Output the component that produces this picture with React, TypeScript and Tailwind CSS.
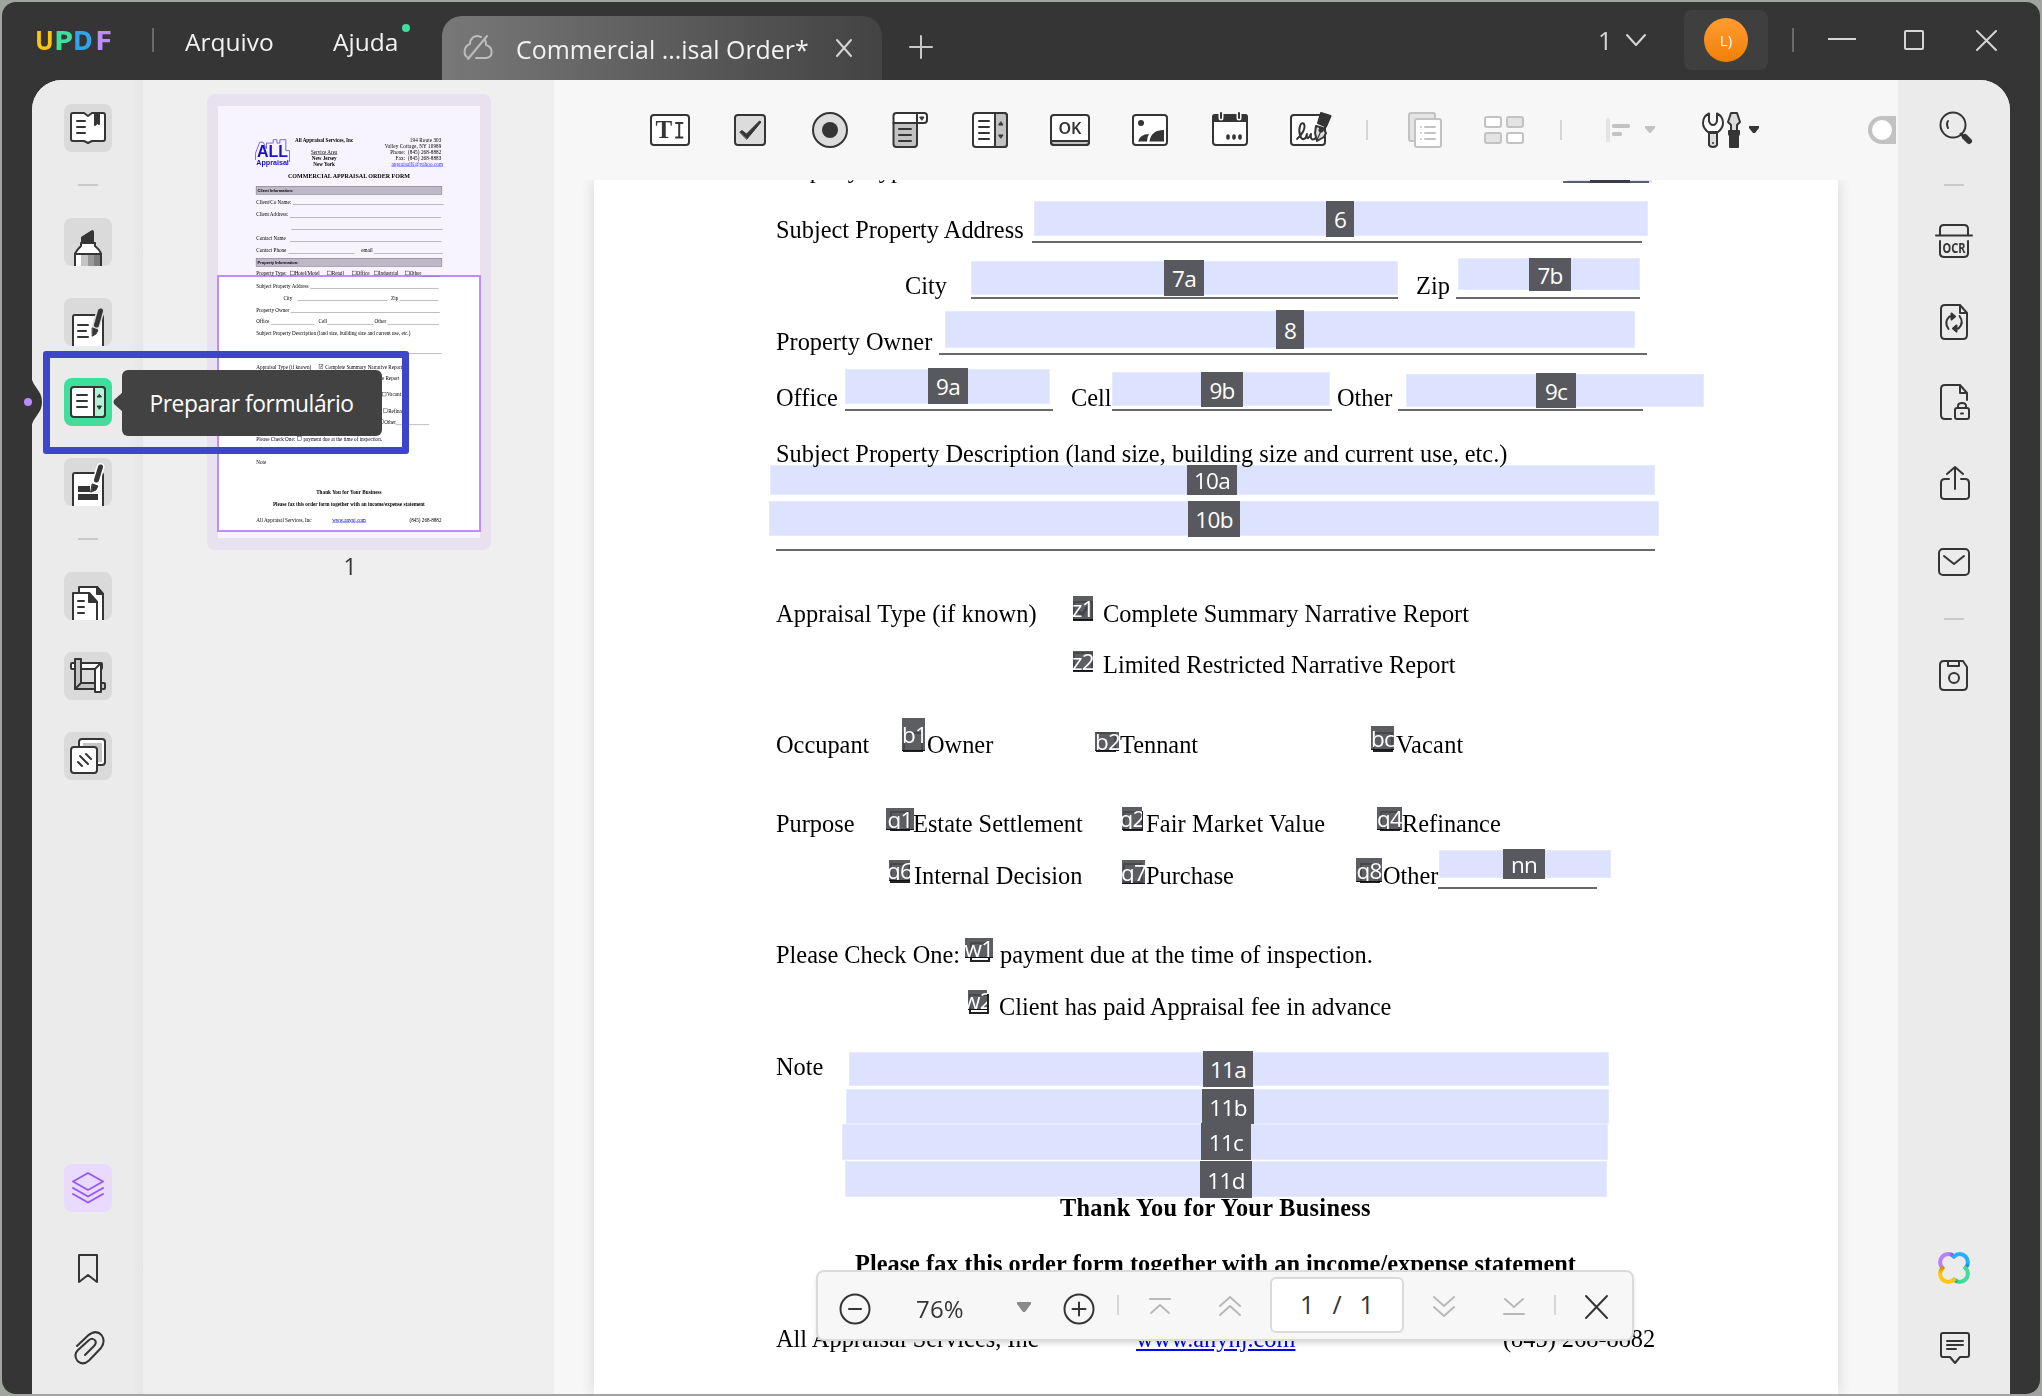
import React from 'react';

const DARK = '#353535';
const MUTED = '#c2c2c2';

interface BoxProps {
  className?: string;
  children?: React.ReactNode;
}

/* --- ICON HELPERS --- */

const Icon: React.FC<{ size?: number; children: React.ReactNode; color?: string; className?: string }> = ({
  size = 44,
  children,
  color = DARK,
  className = '',
}) => (
  <svg
    width={size}
    height={size}
    viewBox={`0 0 ${size} ${size}`}
    fill="none"
    stroke={color}
    strokeWidth={2}
    strokeLinecap="round"
    strokeLinejoin="round"
    className={`shrink-0 ${className}`}
  >
    {children}
  </svg>
);

/* --- TITLE BAR --- */

const TitleBar = () => (
  <header className="flex h-[78px] shrink-0 text-[#f2f2f2]">
    <div className="ml-[33px] flex h-[76px] w-[81px] items-center text-[27px] font-bold font-['Noto_Sans'] [&>span]:origin-left">
      <span className="w-[19px] scale-x-[0.92] text-[#ffc60a]">U</span>
      <span className="w-[19px] scale-x-[1.15] text-[#3fdf9b]">P</span>
      <span className="w-[22px] text-[#30a4ea]">D</span>
      <span className="w-[18px] scale-x-[1.15] text-[#bd8cff]">F</span>
    </div>
    <div className="mt-[26px] ml-[36px] h-[24px] w-[2px] bg-[#6a6a6a]" />
    <div className="ml-[31px] w-[148px] pt-[22px] text-[24.500px] leading-[36px]">Arquivo</div>
    <div className="relative w-[109px] pt-[22px] text-[24.500px] leading-[36px]">
      Ajuda
      <span className="absolute top-[22px] left-[69px] size-[8px] rounded-full bg-[#3fdf9b]" />
    </div>
    <div className="mt-[14px] flex h-[64px] w-[440px] items-start rounded-t-[20px] bg-linear-to-r from-[#787878] to-[#434343] pl-[20px]">
      <Icon size={32} color="#bdbdbd" className="mt-[16px]">
        <path d="M19 5 C12 2 8 7 8 12 C2 14 1 22 5 25 M23 8 C24 10 24 12 24 13 C31 15 32 25 24 26 L14 26" />
        <path d="M25 4 L6 27" />
      </Icon>
      <span className="ml-[22px] w-[316px] pt-[15px] text-[24.900px] leading-[36px] whitespace-nowrap">
        Commercial ...isal Order*
      </span>
      <Icon size={24} color="#d6d6d6" className="mt-[20px]">
        <path d="M5 4 L19 20 M19 4 L5 20" />
      </Icon>
    </div>
    <Icon size={28} color="#c9c9c9" className="mt-[31px] ml-[25px]">
      <path d="M14 3 V25 M3 14 H25" />
    </Icon>
    <div className="grow" />
    <span className="w-[26px] pt-[20px] text-[25px] leading-[36px] text-[#d6d6d6]">1</span>
    <Icon size={24} color="#d6d6d6" className="mt-[26px]">
      <path d="M3 7 L12 17 L21 7" />
    </Icon>
    <div className="mt-[8px] ml-[36px] flex h-[60px] w-[84px] items-center justify-center rounded-[8px] bg-[#3f3f3f]">
      <div className="flex size-[44px] items-center justify-center rounded-full bg-linear-to-b from-[#ff9d2e] to-[#f07f00] text-[15px] text-white">
        L)
      </div>
    </div>
    <div className="mt-[26px] ml-[24px] h-[24px] w-[2px] bg-[#6a6a6a]" />
    <div className="mt-[36px] ml-[34px] h-[2px] w-[28px] bg-[#d6d6d6]" />
    <div className="mt-[28px] ml-[48px] size-[20px] rounded-[2px] border-2 border-[#d6d6d6]" />
    <Icon size={24} color="#d6d6d6" className="mt-[26px] mr-[42px] ml-[50px]">
      <path d="M3 3 L22 22 M22 3 L3 22" />
    </Icon>
  </header>
);

/* --- LEFT RAIL --- */

const RailButton: React.FC<BoxProps> = ({ className = 'bg-[#dadada]', children }) => (
  <div className={`relative size-[48px] shrink-0 rounded-[8px] ${className}`}>{children}</div>
);

const RailDivider = () => <div className="h-[2px] w-[20px] shrink-0 bg-[#c9c9c9]" />;

const LeftRail = () => (
  <aside className="relative z-20 flex w-[111px] shrink-0 flex-col items-center bg-linear-to-r from-[#ebebeb] from-90% to-[#e5e5e5] pt-[24px]">
    <RailButton>
      <Icon size={48}>
        <path d="M7 11 Q7 9 9 9 H20 L24 12 L28 9 H39 Q41 9 41 11 V35 Q41 37 39 37 H28 L24 39 L20 37 H9 Q7 37 7 35 Z" fill="#fff" />
        <path d="M13 17 H21 M13 23 H21 M13 29 H21" />
        <path d="M31 9 V21 L33.500 18.500 L35 20 V9 Z" fill={DARK} />
      </Icon>
    </RailButton>
    <div className="h-[32px]" />
    <RailDivider />
    <div className="h-[32px]" />
    <RailButton>
      <Icon size={48}>
        <path d="M11 48 V36 Q12 33 17 28 V25 H31 V28 Q36 32 37 36 V48" fill="#fff" />
        <path d="M12 37 H17 V48 H12Z" fill="#fff" stroke="none" />
        <path d="M17 37 H24 V48 H17Z" fill="#c4c4c4" stroke="none" />
        <path d="M24 37 H30 V48 H24Z" fill="#999" stroke="none" />
        <path d="M30 37 H36 V48 H30Z" fill="#7d7d7d" stroke="none" />
        <path d="M11 48 V36 H37 V48" />
        <path d="M17 24 V19 L28 12 Q30 12 30 14 V24 Z" fill={DARK} stroke="none" />
      </Icon>
    </RailButton>
    <RailButton className="mt-[32px] bg-[#dadada]">
      <Icon size={48}>
        <path d="M9 48 V19 Q9 17 11 17 H37 Q39 17 39 19 V48" fill="#fff" />
        <path d="M14 27 H24 M14 33 H22 M14 39 H24" />
        <path d="M36.500 13 L32 28" stroke="#dadada" strokeWidth={8} />
        <path d="M36.500 13 L32.500 27" strokeWidth={5} />
        <path d="M28.500 30 L34 32 L32 36 L28.500 38 Z" fill={DARK} strokeWidth={1} />
      </Icon>
    </RailButton>
    <RailButton className="mt-[32px] bg-[#3fdf9b]">
      <Icon size={48}>
        <rect x="7" y="9" width="34" height="30" rx="3" fill="#fff" />
        <path d="M30 9 H38 Q41 9 41 12 V36 Q41 39 38 39 H30Z" fill="#b4f2d7" />
        <path d="M13 17 H23 M13 23 H23 M13 29 H23" />
        <path d="M33.500 19 H37.500 L35.500 16.500Z M33.500 28 H37.500 L35.500 31Z" fill={DARK} strokeWidth={1} />
      </Icon>
      <div className="absolute top-[-8px] left-[58px] flex h-[66px] w-[260px] items-center justify-center rounded-[6px] bg-[#424242] pt-[2px] text-[22.800px] tracking-[-0.45px] whitespace-nowrap text-white">
        <svg width="10" height="20" viewBox="0 0 10 20" className="absolute top-[22px] left-[-9px]">
          <path d="M10 0 L1 8 Q0 10 1 12 L10 20Z" fill="#424242" />
        </svg>
        Preparar formulário
      </div>
    </RailButton>
    <RailButton className="mt-[32px] bg-[#dadada]">
      <Icon size={48}>
        <path d="M9 48 V17 Q9 15 11 15 H37 Q39 15 39 17 V48" fill="#fff" />
        <path d="M14 28 H26 V34 H14Z M14 36 H34 V42 H14Z" fill={DARK} stroke="none" />
        <path d="M36.500 9 L32 24" stroke="#fff" strokeWidth={8} />
        <path d="M36.500 9 L32.500 22" strokeWidth={5} />
        <path d="M28.500 26 L34 28 L32 32 L27 34 Z" fill={DARK} strokeWidth={1} />
      </Icon>
    </RailButton>
    <div className="h-[32px]" />
    <RailDivider />
    <div className="h-[32px]" />
    <RailButton>
      <Icon size={48}>
        <path d="M15 48 V15 H33 L39 22 V48" fill="#fff" />
        <path d="M33 15 V22 H39Z" fill={DARK} />
        <path d="M9 48 V21 H25 L33 30 V48" fill="#fff" />
        <path d="M25 21 V30 H33Z" fill={DARK} />
        <path d="M14 29 H20 M14 35 H20 M14 41 H20" />
      </Icon>
    </RailButton>
    <RailButton className="mt-[32px] bg-[#dadada]">
      <Icon size={48}>
        <rect x="7" y="11" width="31" height="6" rx="1" fill="#fff" />
        <rect x="11" y="31" width="30" height="6" rx="1" fill="#c4c4c4" />
        <path d="M11 7 H17 V31 L11 37Z" fill="#c4c4c4" />
        <path d="M31 17 L37 11 V40 H31Z" fill="#fff" />
      </Icon>
    </RailButton>
    <RailButton className="mt-[32px] bg-[#dadada]">
      <Icon size={48}>
        <rect x="15" y="7" width="26" height="26" rx="3" fill="#fff" />
        <rect x="19" y="11" width="19" height="19" fill="#c4c4c4" stroke="none" />
        <rect x="7" y="15" width="26" height="26" rx="3" fill="#fff" />
        <path d="M14 30 L18 34 M16 24 L24 32 M22 22 L27 27" />
      </Icon>
    </RailButton>
    <div className="h-[384px] shrink-0" />
    <RailButton className="bg-[#e8dbff]">
      <Icon size={48} color="#9b57f5">
        <path d="M24 9 L39 17.500 L24 26 L9 17.500Z" />
        <path d="M9 24 L24 32.500 L39 24 M9 30 L24 38.500 L39 30" />
      </Icon>
    </RailButton>
    <RailButton className="mt-[32px]">
      <Icon size={48}>
        <path d="M15 11 H33 V38 L24 31 L15 38Z" />
      </Icon>
    </RailButton>
    <RailButton className="mt-[32px]">
      <Icon size={48}>
        <path d="M13 22 L24 11.500 Q32 5 37.500 11 Q42 17 37 24 L25 36.500 Q19 42 13.500 37 Q9 31 14 26 L24.500 16.500 Q29 13 31.500 17 Q32.500 19.500 30 22 L21 31" />
      </Icon>
    </RailButton>

    {/* Notch cut into the rail next to the active tool */}
    <svg width="20" height="52" viewBox="0 0 20 52" className="absolute top-[296px] left-[-9px]">
      <path d="M8 0 C10 12 19 14 19 26 C19 38 10 40 8 52Z" fill={DARK} />
      <circle cx="5" cy="26" r="4" fill="#b98aff" />
    </svg>
    <div className="absolute top-[271px] left-[11px] h-[103px] w-[366px] rounded-[3px] border-[7px] border-[#3d45cb]" />
  </aside>
);

/* --- FORM DOCUMENT --- */

const Row: React.FC<BoxProps> = ({ className = '', children }) => (
  <div className={`flex shrink-0 items-end pl-[182px] [&>span]:shrink-0 [&>span]:pb-[1px] ${className}`}>{children}</div>
);

const Rule: React.FC<BoxProps> = ({ className = '' }) => <div className={`h-[2px] shrink-0 bg-[#686868] ${className}`} />;

const Check: React.FC<{ checked?: boolean }> = ({ checked }) => (
  <div className="mx-[1px] mb-[6px] size-[20px] shrink-0 border-2 border-[#222]">
    {checked && (
      <svg width="16" height="16" viewBox="0 0 16 16" fill="none" stroke="#000" strokeWidth="3">
        <path d="M3 8 L7 12 L13 3" />
      </svg>
    )}
  </div>
);

const FormBody = () => (
  <div className="flex flex-col font-['Liberation_Serif'] text-[24.360px] leading-[24px] whitespace-nowrap text-black">
    <Row className="h-[3px]">
      <span className="w-[160px]">Property Type:</span>
      <Check />
      <span className="w-[154px]">Hotel/Motel</span>
      <Check />
      <span className="w-[96px]">Retail</span>
      <Check />
      <span className="w-[83px]">Office</span>
      <Check />
      <span className="w-[125px]">Industrial</span>
      <Check />
      <span className="w-[59px]">Other</span>
      <Rule className="w-[86px]" />
    </Row>
    <Row className="h-[60px]">
      <span className="w-[256px]">Subject Property Address</span>
      <Rule className="w-[610px]" />
    </Row>
    <Row className="h-[56px]">
      <span className="ml-[129px] w-[66px]">City</span>
      <Rule className="w-[427px]" />
      <span className="ml-[18px] w-[40px]">Zip</span>
      <Rule className="w-[184px]" />
    </Row>
    <Row className="h-[56px]">
      <span className="w-[163px]">Property Owner</span>
      <Rule className="w-[708px]" />
    </Row>
    <Row className="h-[56px]">
      <span className="w-[69px]">Office</span>
      <Rule className="w-[208px]" />
      <span className="ml-[18px] w-[41px]">Cell</span>
      <Rule className="w-[220px]" />
      <span className="ml-[5px] w-[61px]">Other</span>
      <Rule className="w-[245px]" />
    </Row>
    <Row className="h-[56px]">
      <span className="tracking-[0.02px]">
        Subject Property Description (land size, building size and current use, etc.)
      </span>
    </Row>
    <Row className="h-[84px]">
      <Rule className="w-[879px]" />
    </Row>
    <Row className="h-[76px]">
      <span className="w-[296px] tracking-[0.1px]">Appraisal Type (if known)</span>
      <Check checked />
      <span className="ml-[9px]">Complete Summary Narrative Report</span>
    </Row>
    <Row className="h-[51px]">
      <div className="w-[296px]" />
      <Check />
      <span className="ml-[9px]">Limited Restricted Narrative Report</span>
    </Row>
    <Row className="h-[80px]">
      <span className="w-[126px]">Occupant</span>
      <Check />
      <span className="ml-[3px] w-[168px]">Owner</span>
      <Check />
      <span className="ml-[3px] w-[252px]">Tennant</span>
      <Check />
      <span className="ml-[2px] tracking-[0.2px]">Vacant</span>
    </Row>
    <Row className="h-[79px]">
      <span className="w-[113px]">Purpose</span>
      <Check />
      <span className="ml-[2px] w-[209px]">Estate Settlement</span>
      <Check />
      <span className="ml-[2px] w-[233px] tracking-[0.15px]">Fair Market Value</span>
      <Check />
      <span className="ml-[1px]">Refinance</span>
    </Row>
    <Row className="h-[52px]">
      <div className="w-[113px]" />
      <Check />
      <span className="ml-[3px] w-[208px]">Internal Decision</span>
      <Check />
      <span className="ml-[2px] w-[213px]">Purchase</span>
      <Check />
      <span className="ml-[2px] w-[55px]">Other</span>
      <Rule className="w-[159px]" />
    </Row>
    <Row className="h-[79px]">
      <span className="w-[193px]">Please Check One:</span>
      <Check />
      <span className="ml-[9px]">payment due at the time of inspection.</span>
    </Row>
    <Row className="h-[52px]">
      <div className="w-[192px]" />
      <Check />
      <span className="ml-[9px]">Client has paid Appraisal fee in advance</span>
    </Row>
    <Row className="h-[60px]">
      <span>Note</span>
    </Row>
    <Row className="h-[141px] font-bold">
      <span className="ml-[284px] tracking-[0.28px]">Thank You for Your Business</span>
    </Row>
    <Row className="h-[56px] font-bold">
      <span className="ml-[79px]">Please fax this order form together with an income/expense statement</span>
    </Row>
    <Row className="h-[75px]">
      <span className="w-[360px]">All Appraisal Services, Inc</span>
      <span className="w-[367px] text-[#0000ff] underline">www.anynj.com</span>
      <span>(845) 268-8882</span>
    </Row>
  </div>
);

const SectionBar: React.FC<BoxProps> = ({ className = '', children }) => (
  <div
    className={`ml-[180px] flex h-[40px] w-[884px] items-center border-2 border-[#6d6878] bg-[#bfb8c8] pt-[6px] pl-[6px] font-['Liberation_Sans'] text-[19px] font-bold ${className}`}
  >
    {children}
  </div>
);

const FormHeader = () => (
  <div className="flex flex-col font-['Liberation_Serif'] text-[24.360px] leading-[28px] whitespace-nowrap text-black">
    <div className="flex h-[316px] pt-[150px]">
      <div className="relative ml-[176px] h-[132px] w-[166px] text-center font-['Liberation_Sans'] font-bold text-[#1a12c8]">
        <svg width="166" height="132" viewBox="0 0 166 132" fill="none" stroke="#5a55c8" strokeWidth="4" className="absolute">
          <path d="M2 106 V74 L22 22 H38 L54 52 V26 H86 V10 H104 V26 H118 V10 H146 V62 H164 V116" />
        </svg>
        <div className="relative pt-[36px] text-[76px] leading-[64px]">ALL</div>
        <div className="relative text-[34px] leading-[34px]">Appraisal</div>
      </div>
      <div className="ml-[24px] w-[276px] text-center font-bold">
        <div>All Appraisal Services, Inc</div>
        <div className="mt-[28px] font-normal underline">Service Area</div>
        <div>New Jersey</div>
        <div>New York</div>
      </div>
      <div className="w-[419px] text-right tracking-[0.5px]">
        <div>194 Route 303</div>
        <div>Valley Cottage, NY 10989</div>
        <div>Phone:&nbsp; (845) 268-8882</div>
        <div>Fax:&nbsp; (845) 268-8883</div>
        <div className="mr-[-8px] text-[#3030ff] underline">appraisalK@yahoo.com</div>
      </div>
    </div>
    <div className="pt-[3px] text-center text-[28.600px] leading-[29px] font-bold">COMMERCIAL APPRAISAL ORDER FORM</div>
    <SectionBar className="mt-[32px]">Client Information:</SectionBar>
    <Row className="h-[50px]">
      <span className="w-[174px]">Client/Co Name:</span>
      <Rule className="w-[716px]" />
    </Row>
    <Row className="h-[61px]">
      <span className="w-[158px]">Client Address:</span>
      <Rule className="w-[719px]" />
    </Row>
    <Row className="h-[57px]">
      <Rule className="ml-[166px] w-[719px]" />
    </Row>
    <Row className="h-[57px]">
      <span className="w-[160px]">Contact Name</span>
      <Rule className="w-[719px]" />
    </Row>
    <Row className="h-[57px]">
      <span className="w-[152px]">Contact Phone</span>
      <Rule className="w-[314px]" />
      <span className="ml-[32px] w-[60px]">email</span>
      <Rule className="w-[328px]" />
    </Row>
    <SectionBar className="mt-[20px] mb-[44px]">Property Information:</SectionBar>
  </div>
);

const ThumbnailPanel = () => (
  <aside className="flex w-[411px] shrink-0 flex-col bg-[#efefef] pt-[14px] pl-[64px]">
    <div className="h-[456px] w-[284px] rounded-[8px] bg-[#e8e2f0] pt-[12px] pl-[11px]">
      <div className="relative h-[432px] w-[262px] bg-[#f8f4ff]">
        <div className="absolute top-[169px] left-[-1px] h-[257px] w-[264px] border-2 border-[#bd8cff] bg-white" />
        <div className="relative h-[2049px] w-[1244px] origin-top-left scale-[0.2106]">
          <FormHeader />
          <FormBody />
        </div>
      </div>
    </div>
    <div className="w-[286px] text-center text-[23px] leading-[33px] text-[#353535]">1</div>
  </aside>
);

/* --- FORM FIELDS --- */

// [name, left, top, width, height, badge left, badge top, badge width, badge height]
const fields: [string, number, number, number, number, number, number, number, number][] = [
  ['6', 440, 21, 614, 35, 732, 21, 28, 36],
  ['7a', 377, 81, 427, 34, 570, 80, 40, 36],
  ['7b', 864, 78, 182, 32, 935, 78, 42, 33],
  ['8', 351, 131, 690, 37, 682, 130, 28, 39],
  ['9a', 251, 189, 205, 35, 334, 188, 40, 36],
  ['9b', 518, 192, 218, 34, 607, 192, 42, 35],
  ['9c', 812, 194, 298, 33, 942, 193, 40, 35],
  ['10a', 176, 285, 885, 30, 593, 285, 50, 30],
  ['10b', 175, 321, 890, 35, 594, 321, 52, 36],
  ['nn', 845, 670, 172, 28, 909, 669, 42, 30],
  ['11a', 255, 872, 760, 34, 609, 871, 50, 36],
  ['11b', 252, 909, 763, 35, 608, 909, 52, 35],
  ['11c', 248, 944, 766, 36, 607, 943, 50, 37],
  ['11d', 251, 981, 762, 36, 606, 981, 52, 37],
];

const checks: [string, number, number, number, number][] = [
  ['z1', 479, 416, 20, 24],
  ['z2', 479, 471, 20, 20],
  ['b1', 308, 538, 23, 33],
  ['b2', 501, 552, 24, 19],
  ['bc', 777, 546, 23, 24],
  ['q1', 292, 628, 28, 22],
  ['q2', 528, 627, 20, 23],
  ['q4', 783, 627, 25, 23],
  ['q6', 295, 680, 21, 21],
  ['q7', 528, 680, 23, 24],
  ['q8', 762, 678, 26, 24],
  ['w1', 371, 758, 28, 20],
  ['w2', 374, 810, 19, 20],
];

const box = (left: number, top: number, width: number, height: number) => ({ left, top, width, height });

const FormFields = () => (
  <div className="absolute inset-0 text-[22.500px] tracking-[-0.7px] text-white">
    {/* Tail of the "Other" field scrolled under the toolbar */}
    <div className="absolute top-0 left-[973px] h-[3px] w-[85px] bg-[#dde3ff] mix-blend-multiply" />
    <div className="absolute top-0 left-[996px] h-[3px] w-[40px] bg-[#3c3d44]" />
    {fields.map(([name, x, y, w, h]) => (
      <div key={name} className="absolute border border-[#e6eaff] bg-[#dde3ff] mix-blend-multiply" style={box(x, y, w, h)} />
    ))}
    {fields.map(([name, , , , , x, y, w, h]) => (
      <div key={name} className="absolute flex items-center justify-center bg-[#58595e] pt-[2px]" style={box(x, y, w, h)}>
        {name}
      </div>
    ))}
    {checks.map(([name, x, y, w, h]) => (
      <div
        key={name}
        className={`absolute flex items-center overflow-hidden border-b border-[#111] bg-[#4b4c51]/90 pt-[2px] ${
          name[0] === 'b' ? 'justify-start' : 'justify-center'
        }`}
        style={box(x, y, w, h)}
      >
        {name}
      </div>
    ))}
  </div>
);

/* --- TOOLBAR --- */

const Divider: React.FC<BoxProps> = ({ className = '' }) => <div className={`h-[20px] w-[2px] shrink-0 bg-[#d6d6d6] ${className}`} />;

const Toolbar = () => (
  <div className="flex h-[100px] shrink-0 items-center overflow-hidden bg-[#f7f7f7] pl-[94px]">
    <div className="flex gap-[36px]">
      <Icon>
        <rect x="3" y="7" width="38" height="30" rx="3" fill="#fff" />
        <text x="7.500" y="30" fontSize="25" fontWeight="bold" fontFamily="Liberation Serif, serif" fill={DARK} stroke="none">
          T
        </text>
        <path d="M28 15 H34.500 M28 29.500 H34.500 M31.200 15 V29" />
      </Icon>
      <Icon>
        <rect x="7" y="7" width="30" height="30" rx="3" fill="#dcdcdc" />
        <path d="M12 24 L14 22.500 L18.500 26 L31.500 13 L33 14 L19 31 Z" fill={DARK} strokeWidth={1} />
      </Icon>
      <Icon>
        <circle cx="22" cy="22" r="17" fill="#dcdcdc" />
        <circle cx="22" cy="22" r="8" fill={DARK} stroke="none" />
      </Icon>
      <Icon>
        <path d="M5.500 15 H29 V36 Q29 39 26 39 H8.500 Q5.500 39 5.500 36Z" fill="#c2c2c2" />
        <path d="M5.500 15 V8 Q5.500 5 8.500 5 H36 Q39 5 39 8 V12 Q39 15 36 15Z M29 5 V15" fill="#fff" />
        <path d="M32 9 H36 L34 12Z" fill={DARK} strokeWidth={1} />
        <path d="M11 21 H23 M11 27 H23 M11 33 H23" />
      </Icon>
      <Icon>
        <rect x="5" y="5" width="34" height="34" rx="3" fill="#fff" />
        <path d="M27 5 H36 Q39 5 39 8 V36 Q39 39 36 39 H27Z" fill="#c2c2c2" />
        <path d="M11 13 H21 M11 19 H21 M11 25 H21 M11 31 H21" />
        <path d="M31 17 H35 L33 14Z M31 27 H35 L33 30Z" fill={DARK} strokeWidth={1} />
      </Icon>
      <Icon>
        <rect x="3" y="7" width="38" height="30" rx="3" fill="#fff" />
        <path d="M3 33 H41 V34 Q41 37 38 37 H6 Q3 37 3 34Z" fill="#c2c2c2" />
        <text x="22" y="26" textAnchor="middle" fontSize="16" fontWeight="600" fontFamily="Noto Sans, sans-serif" fill={DARK} stroke="none">
          OK
        </text>
      </Icon>
      <Icon>
        <rect x="5" y="7" width="34" height="30" rx="3" fill="#fff" />
        <circle cx="13" cy="15" r="3" fill={DARK} stroke="none" />
        <path d="M10 33.500 Q12 26 21 26 Q19 29 19 33.500Z M21.500 33.500 Q23 22 36 22 V33.500Z" fill={DARK} stroke="none" />
      </Icon>
      <Icon>
        <rect x="5" y="7" width="34" height="30" rx="3" fill="#fff" />
        <path d="M5 13 V9 Q5 7 7 7 H37 Q39 7 39 9 V13Z" fill={DARK} />
        <path d="M13 3 V10 M31 3 V10" stroke="#f7f7f7" strokeWidth={5} />
        <path d="M13 5 V10 M31 5 V10" />
        <path d="M20 28 V30 M26 28 V30 M32 28 V30" strokeWidth={3.600} />
      </Icon>
      <Icon>
        <rect x="3" y="7" width="34" height="30" rx="3" fill="#fff" />
        <path d="M9 31 C14 27 18 20 16 16 C13 13 10 20 12 27 C14 34 18 31 19 26 C18 31 20 32 23 26 C22 32 25 33 29 29" />
        <path d="M28 18 L35 20 L38 25 L36 29 L29 33 L27 25Z" fill="#dcdcdc" />
        <path d="M33 5 L42.500 8 L38 18.500 L30 15Z" fill={DARK} />
        <circle cx="33" cy="22" r="1.500" fill={DARK} />
        <path d="M33 23 L29 32" strokeWidth={1.200} />
      </Icon>
    </div>
    <Divider className="ml-[34px]" />
    <Icon color={MUTED} className="ml-[35px]">
      <rect x="6" y="5" width="26" height="28" rx="2" fill="#e4e4e4" />
      <rect x="12" y="11" width="26" height="28" rx="2" fill="#fff" />
      <path d="M18 19 V19 M22 19 H32 M18 25 V25 M22 25 H32 M18 31 V31 M22 31 H32" />
    </Icon>
    <Icon color={MUTED} className="ml-[35px]">
      <rect x="3" y="9" width="16" height="10" rx="2" fill="#fff" />
      <rect x="25" y="9" width="16" height="10" rx="2" fill="#e4e4e4" />
      <rect x="3" y="25" width="16" height="10" rx="2" fill="#e4e4e4" />
      <rect x="25" y="25" width="16" height="10" rx="2" fill="#fff" />
    </Icon>
    <Divider className="ml-[34px]" />
    <svg width="62" height="44" viewBox="0 0 62 44" fill={MUTED} className="ml-[38px] shrink-0">
      <rect x="6" y="10" width="4" height="24" rx="1" fill="#e4e4e4" />
      <rect x="12" y="16" width="18" height="4" rx="1.500" />
      <rect x="12" y="24" width="10" height="4" rx="1.500" />
      <path d="M45 18 H55 V20 L50.500 25 H49.500 L45 20Z" />
    </svg>
    <svg
      width="64"
      height="44"
      viewBox="0 0 64 44"
      fill="none"
      stroke={DARK}
      strokeWidth={2}
      strokeLinejoin="round"
      className="ml-[36px] shrink-0"
    >
      <path d="M11 25 H19 V37 Q18 39 15 39 Q12 39 11 37Z" fill="#dcdcdc" />
      <path d="M11 5.500 V13 Q12 17 15 17 Q18 17 19 13 V5.500 Q25 8 25 15 Q25 20 20 24 H10 Q5 20 5 15 Q5 8 11 5.500Z" fill="#fff" />
      <circle cx="15" cy="35" r="1" fill={DARK} stroke="none" />
      <path d="M33 5 H39 L42 14 L39 17 V23 H33 V17 L30 14Z" fill="#dcdcdc" />
      <path d="M31 23 H41 V26 L40 28 V39 H32 V28 L31 26Z" fill={DARK} />
      <path d="M51 18 H61 V20 L57 25 H55 L51 20Z" fill={DARK} stroke="none" />
    </svg>
    <div className="ml-[106px] h-[28px] w-[28px] shrink-0 rounded-l-[14px] bg-[#c2c2c2] p-[4px]">
      <div className="size-[20px] rounded-full bg-white" />
    </div>
  </div>
);

/* --- ZOOM BAR --- */

const ZoomBar = () => (
  <div className="absolute top-[1090px] left-[262px] flex h-[71px] w-[818px] items-center rounded-[8px] border-2 border-[#dadada] bg-[#f7f7f7] pb-[2px] pl-[19px] text-[24px] text-[#353535] shadow-md">
    <Icon size={36} className="mt-[8px]">
      <circle cx="18" cy="18" r="14.500" />
      <path d="M12 18 H24" />
    </Icon>
    <span className="mt-[8px] ml-[43px] w-[98px] tracking-[0.2px]">76%</span>
    <svg width="20" height="12" viewBox="0 0 20 12" className="mt-[4px]" fill="#8a8a8a">
      <path d="M3 1 H17 V3 L11 11 H9 L3 3Z" />
    </svg>
    <Icon size={36} className="mt-[8px] ml-[27px]">
      <circle cx="18" cy="18" r="14.500" />
      <path d="M11.500 18 H24.500 M18 11.500 V24.500" />
    </Icon>
    <Divider className="ml-[20px]" />
    <Icon size={28} color="#b9b9b9" className="mt-[5px] ml-[27px]">
      <path d="M4 6 H24 M5 20 L14 12 L23 20" />
    </Icon>
    <Icon size={28} color="#b9b9b9" className="mt-[5px] ml-[42px]">
      <path d="M4 13 L14 4 L24 13 M4 22 L14 13 L24 22" />
    </Icon>
    <div className="ml-[26px] flex h-[56px] w-[134px] items-center justify-center gap-[18px] rounded-[6px] border-2 border-[#dadada] bg-white text-[25px]">
      <span>1</span>
      <span>/</span>
      <span>1</span>
    </div>
    <Icon size={28} color="#b9b9b9" className="mt-[5px] ml-[26px]">
      <path d="M4 4 L14 13 L24 4 M4 14 L14 23 L24 14" />
    </Icon>
    <Icon size={28} color="#b9b9b9" className="mt-[5px] ml-[42px]">
      <path d="M5 6 L14 14 L23 6 M4 21 H24" />
    </Icon>
    <Divider className="ml-[26px]" />
    <Icon size={28} className="mt-[5px] ml-[26px]">
      <path d="M4 3 L25 25 M25 3 L4 25" />
    </Icon>
  </div>
);

/* --- RIGHT RAIL --- */

const RightRail = () => (
  <aside className="flex w-[112px] shrink-0 flex-col items-center bg-[#ebebeb] pt-[24px]">
    <Icon size={48}>
      <circle cx="23" cy="21" r="12.500" />
      <path d="M18 17 Q16 20 18 24" />
      <path d="M31 30 L34 33" strokeWidth={3} />
      <path d="M35 33 L39 37" strokeWidth={6} />
    </Icon>
    <div className="h-[32px] shrink-0" />
    <RailDivider />
    <div className="h-[32px] shrink-0" />
    <Icon size={48}>
      <path d="M10 17 V11 Q10 7 14 7 H34 Q38 7 38 11 V17 M6 17.500 H42" />
      <path d="M10 23 V35 Q10 39 14 39 H34 Q38 39 38 35 V23" />
      <text
        x="24"
        y="34.500"
        textAnchor="middle"
        textLength="23"
        lengthAdjust="spacingAndGlyphs"
        fontSize="13.500"
        fontWeight="bold"
        fontFamily="Noto Sans, sans-serif"
        fill={DARK}
        stroke="none"
      >
        OCR
      </text>
    </Icon>
    <Icon size={48} className="mt-[32px]">
      <path d="M30 7 L37 15 V37 Q37 41 33 41 H15 Q11 41 11 37 V11 Q11 7 15 7Z M30 7 V15 H37" />
      <path d="M18.500 31 Q13.500 24 19.500 18.500 H23 M29.500 18 Q34.500 25 28.500 30.500 H25" />
      <path d="M21.500 15.500 L25 18.500 L21.500 21.500Z M26.500 27.500 L23 30.500 L26.500 33.500Z" fill={DARK} />
    </Icon>
    <Icon size={48} className="mt-[32px]">
      <path d="M37 22 V15 L30 7 H15 Q11 7 11 11 V37 Q11 41 15 41 H21 M30 7 V15 H37" />
      <rect x="25" y="30" width="14" height="11" rx="2" />
      <path d="M28 30 V28 Q28 25 32 25 Q36 25 36 28 V30 M31 35.500 H33" />
    </Icon>
    <Icon size={48} className="mt-[32px]">
      <path d="M19 21 H15 Q11 21 11 25 V38 Q11 41 15 41 H35 Q39 41 39 38 V25 Q39 21 35 21 H31" />
      <path d="M25 31 V9 M17 16 L25 9 L33 16" />
    </Icon>
    <Icon size={48} className="mt-[32px]">
      <rect x="9" y="11" width="30" height="26" rx="4" />
      <path d="M14 18 L24 26 L34 18" />
    </Icon>
    <div className="h-[32px] shrink-0" />
    <RailDivider />
    <div className="h-[32px] shrink-0" />
    <Icon size={48}>
      <path d="M14 9 H33 L37 15 V34 Q37 38 33 38 H14 Q10 38 10 34 V13 Q10 9 14 9Z" />
      <path d="M18 9 V14 H29 V9" />
      <circle cx="24" cy="26" r="5" />
    </Icon>
    <div className="h-[544px] shrink-0" />
    <svg width="48" height="48" viewBox="0 0 48 48" fill="none" strokeWidth="4" strokeLinecap="round" className="shrink-0">
      <defs>
        <linearGradient id="purple">
          <stop offset="0.600" stopColor="#b67fff" />
          <stop offset="1" stopColor="#7746c4" />
        </linearGradient>
        <linearGradient id="blue" x2="0" y2="1">
          <stop offset="0.600" stopColor="#22b0ff" />
          <stop offset="1" stopColor="#1373bb" />
        </linearGradient>
        <linearGradient id="green" x1="1" x2="0">
          <stop offset="0.600" stopColor="#3fdf9b" />
          <stop offset="1" stopColor="#1f9d70" />
        </linearGradient>
        <linearGradient id="yellow" y1="1" x2="0" y2="0">
          <stop offset="0.600" stopColor="#ffc60a" />
          <stop offset="1" stopColor="#e58a00" />
        </linearGradient>
      </defs>
      <path d="M12.500 24 A7.500 7.500 0 1 1 24 12.500" stroke="url(#purple)" />
      <path d="M24 12.500 A7.500 7.500 0 1 1 35.500 24" stroke="url(#blue)" />
      <path d="M35.500 24 A7.500 7.500 0 1 1 24 35.500" stroke="url(#green)" />
      <path d="M24 35.500 A7.500 7.500 0 1 1 12.500 24" stroke="url(#yellow)" />
    </svg>
    <Icon size={48} className="mt-[32px]">
      <path d="M13 9 H37 Q39 9 39 11 V31 Q39 33 37 33 H30 L25 39 L20 33 H13 Q11 33 11 31 V11 Q11 9 13 9Z" />
      <path d="M17 17 H33 M17 21 H33 M17 25 H26" />
    </Icon>
  </aside>
);

export default function App() {
  return (
    <div className="h-[1396px] w-[2042px] overflow-hidden bg-[#a0a69f] p-[2px] font-['Open_Sans',sans-serif]">
      <div className="flex h-[1392px] w-[2038px] flex-col overflow-hidden rounded-[14px] bg-[#353535]">
        <TitleBar />
        <div className="relative mx-[30px] h-[1314px]">
          <div className="flex h-full w-[1978px] rounded-t-[30px] bg-[#f7f7f7] [&>aside:first-child]:rounded-tl-[30px] [&>aside:last-child]:rounded-tr-[30px]">
            <LeftRail />
            <ThumbnailPanel />
            <main className="flex w-[1344px] shrink-0 flex-col">
              <Toolbar />
              <div className="relative h-[1214px] overflow-hidden">
                <div className="relative ml-[40px] h-full w-[1244px] bg-white shadow-[0_0_14px_rgba(0,0,0,0.14)]">
                  <FormBody />
                  <FormFields />
                </div>
                <ZoomBar />
              </div>
            </main>
            <RightRail />
          </div>
        </div>
      </div>
    </div>
  );
}
